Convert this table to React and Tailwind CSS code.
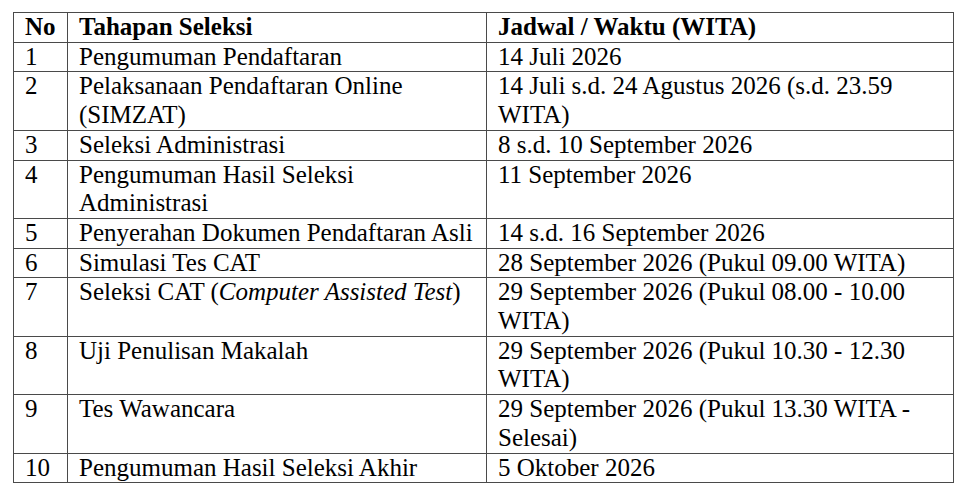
import React from "react";

const rows = [
  ["1", "Pengumuman Pendaftaran", "14 Juli 2026"],
  ["2", "Pelaksanaan Pendaftaran Online (SIMZAT)", "14 Juli s.d. 24 Agustus 2026 (s.d. 23.59 WITA)"],
  ["3", "Seleksi Administrasi", "8 s.d. 10 September 2026"],
  ["4", "Pengumuman Hasil Seleksi Administrasi", "11 September 2026"],
  ["5", "Penyerahan Dokumen Pendaftaran Asli", "14 s.d. 16 September 2026"],
  ["6", "Simulasi Tes CAT", "28 September 2026 (Pukul 09.00 WITA)"],
  ["7", null, "29 September 2026 (Pukul 08.00 - 10.00 WITA)"],
  ["8", "Uji Penulisan Makalah", "29 September 2026 (Pukul 10.30 - 12.30 WITA)"],
  ["9", "Tes Wawancara", "29 September 2026 (Pukul 13.30 WITA - Selesai)"],
  ["10", "Pengumuman Hasil Seleksi Akhir", "5 Oktober 2026"],
];

const cell = "border border-[#4a4a4a] align-top pl-[11px] pr-[8px] py-0 text-left";

export default function App() {
  return (
    <div className="pt-[12px] pl-[13px] text-black font-['Liberation_Serif',serif]">
      <table className="border-collapse text-[25px] leading-[28.7px]">
        <thead>
          <tr>
            <th className={cell + " w-[54px] font-bold"}>No</th>
            <th className={cell + " w-[419px] font-bold"}>Tahapan Seleksi</th>
            <th className={cell + " w-[467px] font-bold"}>Jadwal / Waktu (WITA)</th>
          </tr>
        </thead>
        <tbody>
          {rows.map(([no, name, date]) => (
            <tr key={no}>
              <td className={cell}>{no}</td>
              <td className={cell}>
                {name === null ? (
                  <>
                    Seleksi CAT (<i className="italic">Computer Assisted Test</i>)
                  </>
                ) : (
                  name
                )}
              </td>
              <td className={cell}>{date}</td>
            </tr>
          ))}
        </tbody>
      </table>
    </div>
  );
}
